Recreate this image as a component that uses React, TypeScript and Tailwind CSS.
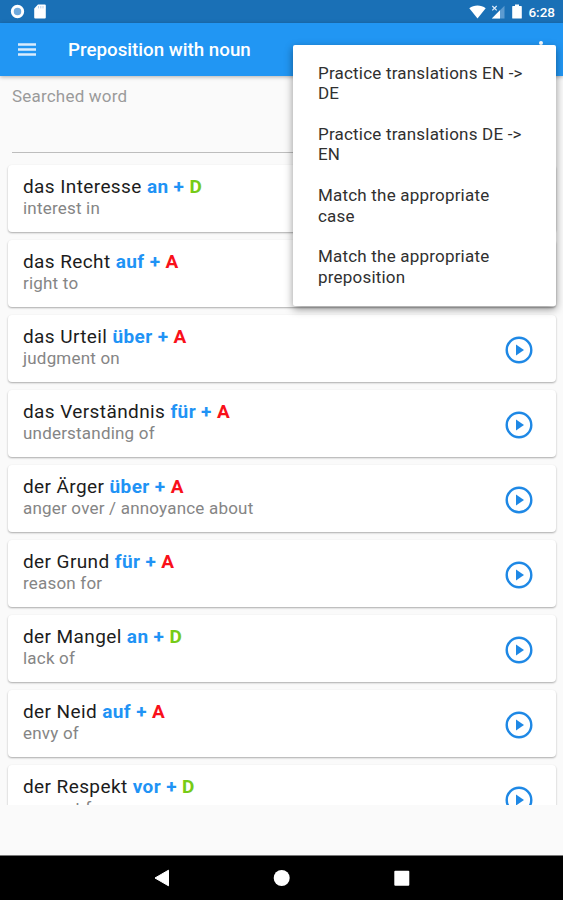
type Entry = { noun: string; prep: string; kase: "A" | "D"; meaning: string };

const entries: Entry[] = [
  { noun: "das Interesse", prep: "an", kase: "D", meaning: "interest in" },
  { noun: "das Recht", prep: "auf", kase: "A", meaning: "right to" },
  { noun: "das Urteil", prep: "über", kase: "A", meaning: "judgment on" },
  { noun: "das Verständnis", prep: "für", kase: "A", meaning: "understanding of" },
  { noun: "der Ärger", prep: "über", kase: "A", meaning: "anger over / annoyance about" },
  { noun: "der Grund", prep: "für", kase: "A", meaning: "reason for" },
  { noun: "der Mangel", prep: "an", kase: "D", meaning: "lack of" },
  { noun: "der Neid", prep: "auf", kase: "A", meaning: "envy of" },
  { noun: "der Respekt", prep: "vor", kase: "D", meaning: "respect for" },
];

const menuItems = [
  "Practice translations EN -> DE",
  "Practice translations DE -> EN",
  "Match the appropriate case",
  "Match the appropriate preposition",
];

function StatusBar() {
  return (
    <div className="flex h-[23px] shrink-0 items-center bg-[#1a70b6] text-white">
      <svg className="ml-[10px]" width="15" height="15" viewBox="0 0 15 15">
        <circle cx="7.5" cy="7.5" r="5.2" fill="#6fa9dc" stroke="#fff" strokeWidth="2.9" />
      </svg>
      <svg className="ml-[9px]" width="12" height="15" viewBox="0 0 12 15">
        <path d="M4 .5h6.800a1 1 0 0 1 1 1v12a1 1 0 0 1-1 1H1.200a1 1 0 0 1-1-1V4.600z" fill="#fff" />
        <path d="M4.500 2v2.400M6.800 2v2.400M9 2v2.400" stroke="#b9d0ea" strokeWidth="1" />
      </svg>
      <div className="ml-auto flex items-center pr-[8px]">
        <svg width="17" height="14" viewBox="0 0 17 14">
          <path d="M8.500 13.500.3 3.300C2.600 1.500 5.400.5 8.500.5s5.900 1 8.200 2.800z" fill="#fff" />
        </svg>
        <svg className="ml-[5px]" width="14" height="14" viewBox="0 0 14 14">
          <path d="M13.500.8v12.700H.8z" fill="#5d9bd0" />
          <path d="M9 5.300v8.200H.8z" fill="#fff" />
          <path d="m1.300 1 4.400 4.400M5.700 1 1.300 5.400" stroke="#dceafa" strokeWidth="1.200" />
        </svg>
        <svg className="ml-[7px]" width="10" height="15" viewBox="0 0 10 15">
          <path d="M3 .5h4v1.600h2.200q.6 0 .6.600v11.200q0 .6-.6.600H.8q-.6 0-.6-.600V2.700q0-.6.600-.6H3z" fill="#fff" />
        </svg>
        <span className="ml-[6px] pt-[2px] text-[13.5px] font-medium leading-none">6:28</span>
      </div>
    </div>
  );
}

function PlayIcon() {
  return (
    <svg className="shrink-0" width="28" height="28" viewBox="0 0 28 28">
      <circle cx="14" cy="14" r="12.3" fill="none" stroke="#1e88e5" strokeWidth="2.4" />
      <path d="M11 8.500v11l8-5.500z" fill="#1e88e5" />
    </svg>
  );
}

function Card({ entry }: { entry: Entry }) {
  return (
    <div className="flex h-[67px] shrink-0 items-center justify-between rounded-[4px] bg-white pl-[15px] pr-[23px] shadow-[0_1px_2px_rgba(0,0,0,0.32)]">
      <div className="self-start pt-[11px]">
        <div className="h-[22px] whitespace-nowrap text-[19px] leading-[22px] tracking-[0.4px] text-[#1c1c1c]">
          {entry.noun}{" "}
          <span className="font-bold text-[#1f93f5]">{entry.prep} + </span>
          <span className={entry.kase === "A" ? "font-bold text-[#f9101a]" : "font-bold text-[#76cb17]"}>{entry.kase}</span>
        </div>
        <div className="h-[21px] whitespace-nowrap text-[17px] leading-[21px] tracking-[0.2px] text-[#858585]">{entry.meaning}</div>
      </div>
      <div className="pt-[2px]">
        <PlayIcon />
      </div>
    </div>
  );
}

function OverflowMenu() {
  return (
    <div className="absolute left-[293px] top-[45px] flex h-[260.5px] w-[263px] flex-col rounded-[2px] bg-white pl-[25px] pt-[17.5px] shadow-[0_3px_8px_rgba(0,0,0,0.42)]">
      {menuItems.map((item) => (
        <div key={item} className="h-[61.3px] w-[209px] shrink-0 text-[17px] leading-[20.5px] tracking-[0.2px] text-[#303030]">
          {item}
        </div>
      ))}
    </div>
  );
}

export default function App() {
  return (
    <div className="relative flex h-[900px] w-[563px] flex-col overflow-hidden bg-[#fafafa] font-['Roboto',sans-serif]">
      <StatusBar />
      <header className="flex h-[53px] shrink-0 items-center bg-[#2196f3] pl-[18px] shadow-[0_1px_4px_rgba(0,0,0,0.3)]">
        <svg width="18" height="14" viewBox="0 0 18 14">
          <path d="M0 1.500h18M0 6.500h18M0 11.500h18" stroke="#d9ecfd" strokeWidth="2.300" />
        </svg>
        <h1 className="ml-[32px] pt-px text-[18.75px] font-medium text-white">Preposition with noun</h1>
        <svg className="ml-auto mr-[20px]" width="4" height="18" viewBox="0 0 4 18">
          <circle cx="2" cy="2" r="2" fill="#fff" />
          <circle cx="2" cy="9" r="2" fill="#fff" />
          <circle cx="2" cy="16" r="2" fill="#fff" />
        </svg>
      </header>
      <div className="mx-[12px] h-[77px] shrink-0 border-b border-[#bdbdbd] pt-[10px] text-[17px] leading-[21px] tracking-[0.2px] text-[#9a9a9a]">
        Searched word
      </div>
      <main className="flex h-[652px] shrink-0 flex-col gap-[8px] overflow-hidden pl-[8px] pr-[7px] pt-[12px]">
        {entries.map((entry) => (
          <Card key={entry.noun} entry={entry} />
        ))}
      </main>
      <div className="flex-1" />
      <nav className="h-[45px] shrink-0 border-t border-[#777] bg-black">
        <svg width="563" height="44" viewBox="0 1 563 44">
          <path d="M155 23 168.500 15.200v15.600z" fill="#fff" stroke="#fff" strokeLinejoin="round" />
          <circle cx="281.700" cy="23" r="8" fill="#fff" />
          <rect x="394.300" y="15.700" width="15" height="15" rx="1" fill="#fff" />
        </svg>
      </nav>
      <OverflowMenu />
    </div>
  );
}
